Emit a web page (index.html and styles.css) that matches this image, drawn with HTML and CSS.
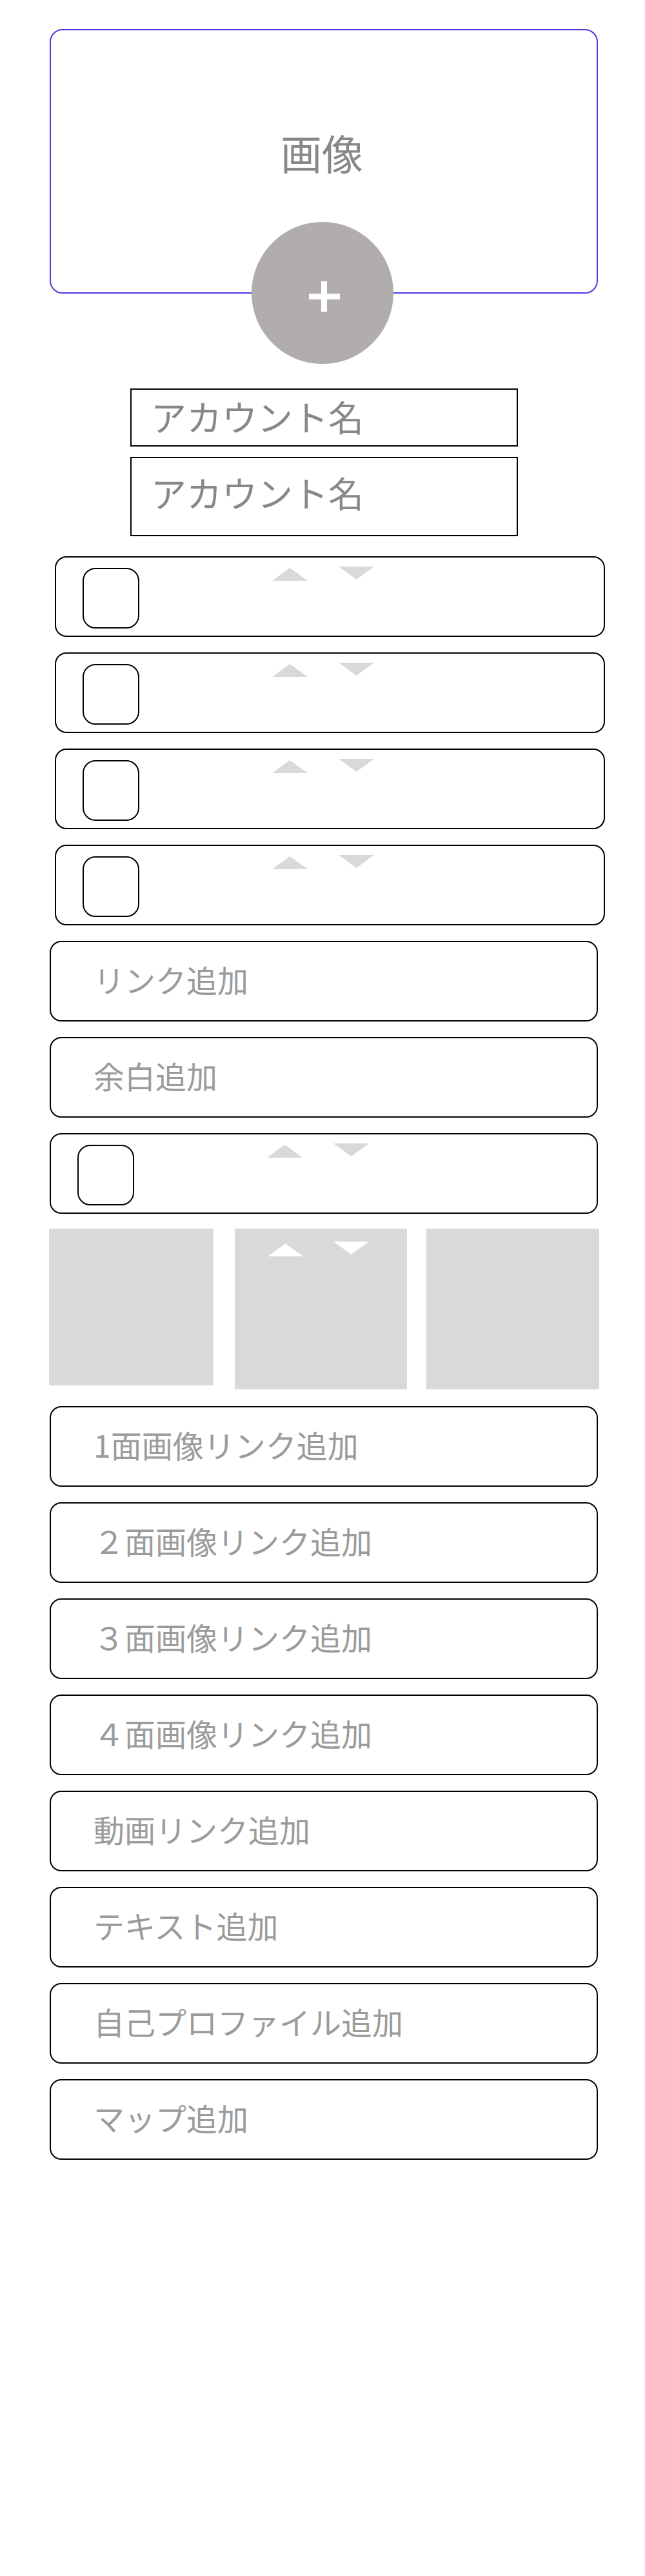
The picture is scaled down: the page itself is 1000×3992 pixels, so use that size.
FILE: index.html
```html
<!DOCTYPE html>
<html lang="ja">
<head>
<meta charset="utf-8">
<title>編集</title>
<link rel="stylesheet" href="styles.css">
</head>
<body>
<div class="page">
  <div class="image-box">
    <span class="image-label">画像</span>
    <div class="add-circle">
      <svg width="220" height="220" viewBox="0 0 220 220"><rect x="89" y="111" width="48" height="9" fill="#fff"/><rect x="108" y="92" width="9" height="47" fill="#fff"/></svg>
    </div>
  </div>

  <div class="accounts">
    <div class="account account-1">アカウント名</div>
    <div class="account account-2">アカウント名</div>
  </div>

  <div class="list">
    <div class="row row-shift">
      <div class="check"></div>
      <div class="arrows">
        <svg class="tri tri-up" width="55" height="20" viewBox="0 0 55 20"><polygon points="0,20 27.5,0 55,20" fill="#d9d9d9"/></svg>
        <svg class="tri tri-down" width="55" height="20" viewBox="0 0 55 20"><polygon points="0,0 55,0 27.5,20" fill="#d9d9d9"/></svg>
      </div>
    </div>
    <div class="row row-shift">
      <div class="check"></div>
      <div class="arrows">
        <svg class="tri tri-up" width="55" height="20" viewBox="0 0 55 20"><polygon points="0,20 27.5,0 55,20" fill="#d9d9d9"/></svg>
        <svg class="tri tri-down" width="55" height="20" viewBox="0 0 55 20"><polygon points="0,0 55,0 27.5,20" fill="#d9d9d9"/></svg>
      </div>
    </div>
    <div class="row row-shift">
      <div class="check"></div>
      <div class="arrows">
        <svg class="tri tri-up" width="55" height="20" viewBox="0 0 55 20"><polygon points="0,20 27.5,0 55,20" fill="#d9d9d9"/></svg>
        <svg class="tri tri-down" width="55" height="20" viewBox="0 0 55 20"><polygon points="0,0 55,0 27.5,20" fill="#d9d9d9"/></svg>
      </div>
    </div>
    <div class="row row-shift">
      <div class="check"></div>
      <div class="arrows">
        <svg class="tri tri-up" width="55" height="20" viewBox="0 0 55 20"><polygon points="0,20 27.5,0 55,20" fill="#d9d9d9"/></svg>
        <svg class="tri tri-down" width="55" height="20" viewBox="0 0 55 20"><polygon points="0,0 55,0 27.5,20" fill="#d9d9d9"/></svg>
      </div>
    </div>

    <div class="add-btn">リンク追加</div>
    <div class="add-btn">余白追加</div>

    <div class="row">
      <div class="check"></div>
      <div class="arrows">
        <svg class="tri tri-up" width="55" height="20" viewBox="0 0 55 20"><polygon points="0,20 27.5,0 55,20" fill="#d9d9d9"/></svg>
        <svg class="tri tri-down" width="55" height="20" viewBox="0 0 55 20"><polygon points="0,0 55,0 27.5,20" fill="#d9d9d9"/></svg>
      </div>
    </div>

    <div class="blocks">
      <div class="block block-1"></div>
      <div class="block block-2">
        <svg class="tri tri-up-w" width="55" height="20" viewBox="0 0 55 20"><polygon points="0,20 27.5,0 55,20" fill="#fff"/></svg>
        <svg class="tri tri-down-w" width="55" height="20" viewBox="0 0 55 20"><polygon points="0,0 55,0 27.5,20" fill="#fff"/></svg>
      </div>
      <div class="block block-3"></div>
    </div>

    <div class="add-btn after-blocks">1面画像リンク追加</div>
    <div class="add-btn">２面画像リンク追加</div>
    <div class="add-btn">３面画像リンク追加</div>
    <div class="add-btn">４面画像リンク追加</div>
    <div class="add-btn">動画リンク追加</div>
    <div class="add-btn">テキスト追加</div>
    <div class="add-btn">自己プロファイル追加</div>
    <div class="add-btn">マップ追加</div>
  </div>
</div>
</body>
</html>
```
FILE: styles.css
```css
* {
  box-sizing: border-box;
}

html, body {
  margin: 0;
  padding: 0;
  background: #ffffff;
}

body {
  font-family: "Noto Sans CJK JP", "Noto Sans", sans-serif;
  color: #888888;
}

.page {
  width: 1000px;
  padding-top: 45px;
  padding-bottom: 600px;
}

/* image area */
.image-box {
  position: relative;
  margin-left: 77px;
  width: 850px;
  height: 410px;
  border: 2px solid #4a3ae0;
  border-radius: 20px;
  display: flex;
  align-items: center;
  justify-content: center;
  padding-bottom: 30px;
}

.image-label {
  font-size: 64px;
  line-height: 1;
  color: #888888;
  margin-right: 6px;
}

.add-circle {
  position: absolute;
  left: 311px;
  top: 297px;
  width: 220px;
  height: 220px;
  border-radius: 50%;
  background: #b0adac;
}

.add-circle svg {
  display: block;
}

/* account names */
.accounts {
  margin-top: 147px;
  margin-left: 202px;
  width: 601px;
  display: flex;
  flex-direction: column;
  gap: 16px;
}

.account {
  border: 2px solid #000;
  font-size: 55px;
  line-height: 1;
  color: #888888;
  padding-left: 30px;
}

.account-1 {
  height: 90px;
  display: flex;
  align-items: center;
  padding-bottom: 6px;
}

.account-2 {
  height: 123px;
  padding-top: 25px;
}

/* list */
.list {
  margin-top: 31px;
  display: flex;
  flex-direction: column;
  align-items: flex-start;
  gap: 24px;
}

.row {
  margin-left: 77px;
  width: 850px;
  height: 125px;
  border: 2px solid #000;
  border-radius: 18px;
  display: flex;
  align-items: flex-start;
  padding: 14px 0 0 41px;
}

.row-shift {
  margin-left: 85px;
  width: 853px;
}

.check {
  margin-top: 2px;
  width: 88px;
  height: 94px;
  border: 2px solid #000;
  border-radius: 20px;
  flex: none;
}

.arrows {
  display: flex;
  align-items: flex-start;
  margin-left: 206px;
  gap: 48px;
}

.tri {
  display: block;
  flex: none;
}

.tri-up {
  margin-top: 2px;
}

.tri-down {
  margin-top: 0;
}

/* grey blocks */
.blocks {
  margin-top: -1px;
  margin-left: 76px;
  display: flex;
  align-items: flex-start;
}

.block {
  background: #d9d9d9;
}

.block-1 {
  width: 255px;
  height: 243px;
}

.block-2 {
  margin-left: 33px;
  width: 267px;
  height: 249px;
  display: flex;
  align-items: flex-start;
  padding-left: 51px;
}

.block-3 {
  margin-left: 30px;
  width: 268px;
  height: 249px;
}

.tri-up-w {
  margin-top: 23px;
}

.tri-down-w {
  margin-top: 20px;
  margin-left: 47px;
}

/* add buttons */
.add-btn {
  margin-left: 77px;
  width: 850px;
  height: 125px;
  border: 2px solid #000;
  border-radius: 18px;
  display: flex;
  align-items: center;
  padding-left: 66px;
  padding-bottom: 8px;
  font-size: 48px;
  line-height: 1;
  color: #9b9b9b;
}

.after-blocks {
  margin-top: 2px;
}
```
